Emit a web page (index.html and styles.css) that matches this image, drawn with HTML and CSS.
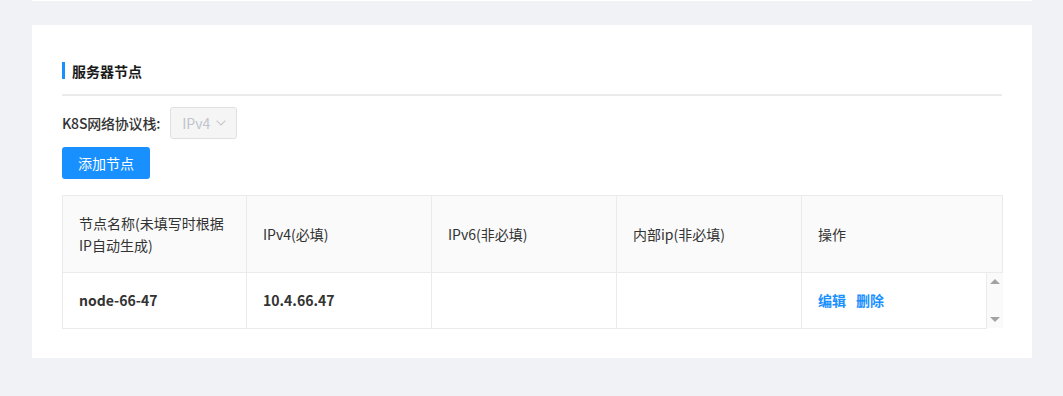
FILE: index.html
```html
<!DOCTYPE html>
<html lang="zh-CN">
<head>
<meta charset="utf-8">
<title>服务器节点</title>
<link rel="stylesheet" href="styles.css">
</head>
<body>
<div class="page">
  <div class="prev-card"></div>
  <section class="card">
    <div class="title"><span class="title-bar"></span><h2>服务器节点</h2></div>
    <div class="divider"></div>
    <div class="form-row">
      <label class="label">K8S网络协议栈:</label>
      <div class="select is-disabled">
        <span class="select-value">IPv4</span>
        <svg class="chev" width="10" height="6" viewBox="0 0 10 6"><path d="M0.6 0.6 L5 5 L9.4 0.6" fill="none" stroke="#c8c8c8" stroke-width="1.1"/></svg>
      </div>
    </div>
    <button class="btn-primary">添加节点</button>
    <table class="grid">
      <colgroup>
        <col class="c1"><col class="c2"><col class="c3"><col class="c4"><col class="c5"><col class="cs">
      </colgroup>
      <thead>
        <tr>
          <th>节点名称(未填写时根据IP自动生成)</th>
          <th>IPv4(必填)</th>
          <th>IPv6(非必填)</th>
          <th>内部ip(非必填)</th>
          <th colspan="2">操作</th>
        </tr>
      </thead>
      <tbody>
        <tr>
          <td class="strong">node-66-47</td>
          <td class="strong">10.4.66.47</td>
          <td></td>
          <td></td>
          <td><a class="link">编辑</a><a class="link">删除</a></td>
          <td class="scroll"><div class="sb"><span class="arr up"></span><span class="arr down"></span></div></td>
        </tr>
      </tbody>
    </table>
  </section>
</div>
</body>
</html>
```

FILE: styles.css
```css
* { box-sizing: border-box; }
html, body { margin: 0; padding: 0; }
body {
  background: #f0f2f5;
  font-family: "Noto Sans CJK SC", "Noto Sans", sans-serif;
  font-size: 14px;
  color: #333;
  width: 1063px;
  height: 396px;
  overflow: hidden;
}
.page { padding: 0 31px 0 32px; }
.prev-card { height: 1px; background: #fff; width: 1000px; }
.card {
  margin-top: 24px;
  width: 1000px;
  background: #fff;
  padding: 30px 30px 29px 30px;
}
.title {
  height: 31px;
  display: flex;
  align-items: center;
}
.title-bar { width: 3px; height: 17px; background: #1890ff; margin-right: 7px; }
.title h2 { margin: 0; font-size: 14px; font-weight: 700; color: #1a1a1a; line-height: 20px; }
.divider { margin-top: 8px; height: 2px; background: #ebebeb; }
.form-row {
  margin-top: 11px;
  display: flex;
  align-items: center;
  height: 32px;
}
.label { font-size: 14px; font-weight: 500; color: #333; margin-right: 10px; letter-spacing: -0.2px; }
.select {
  width: 67px; height: 32px;
  border: 1px solid #e0e0e0; border-radius: 3px;
  background: #f5f5f5;
  display: flex; align-items: center;
  padding: 0 10px 0 11px;
  justify-content: space-between;
  flex: none;
}
.select-value { color: #c0c4cc; font-size: 14px; }
.chev { display: block; }
.btn-primary {
  margin-top: 8px;
  display: block;
  width: 88px; height: 32px;
  background: #1890ff; color: #fff;
  border: 0; border-radius: 3px;
  font-family: inherit; font-size: 14px;
  padding: 0;
}
.grid {
  margin-top: 16px;
  width: 940px;
  table-layout: fixed;
  border-collapse: collapse;
}
.c1 { width: 184px; }
.c2, .c3, .c4, .c5 { width: 185px; }
.cs { width: 16px; }
.grid th, .grid td {
  border: 1px solid #ebebeb;
  text-align: left;
  padding: 0 16px;
  vertical-align: middle;
}
.grid th {
  height: 77px;
  background: #fafafa;
  font-weight: 400;
  color: #333;
  line-height: 22px;
}
.grid td { height: 55px; }
.strong { font-weight: 700; color: #333; }
.link { color: #1890ff; font-weight: 700; margin-right: 10px; cursor: pointer; }
.grid td.scroll {
  padding: 0;
  border-right: 0; border-bottom: 0;
  background: #fafafa;
  vertical-align: top;
}
.sb { position: relative; height: 55px; }
.arr { position: absolute; left: 3px; width: 0; height: 0; border-left: 5px solid transparent; border-right: 5px solid transparent; }
.arr.up { top: 6px; border-bottom: 5px solid #a3a3a3; }
.arr.down { bottom: 6px; border-top: 5px solid #a3a3a3; }
```
